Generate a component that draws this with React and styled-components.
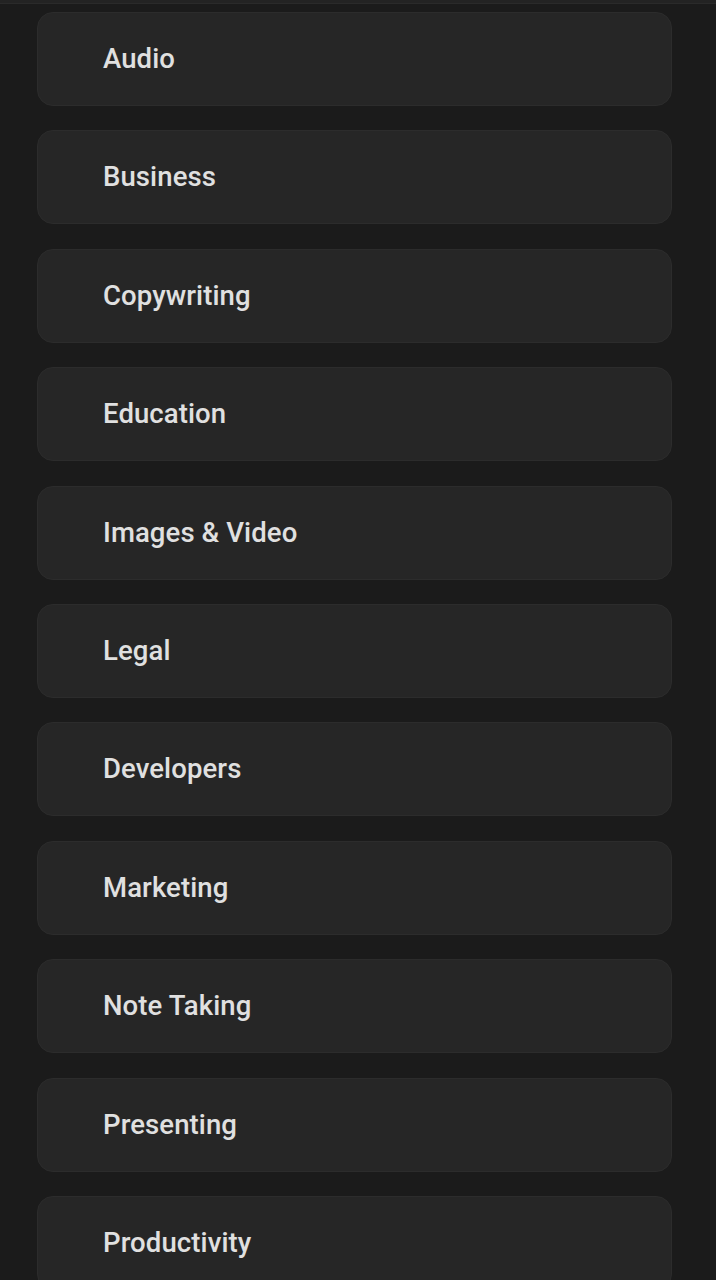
import styled, { createGlobalStyle } from 'styled-components';

const GlobalStyle = createGlobalStyle`
  html, body {
    margin: 0;
    padding: 0;
    background: #1b1b1b;
  }
  body {
    font-family: Roboto, "Liberation Sans", sans-serif;
  }
`;

const Page = styled.div`
  min-height: 1280px;
  background: #1b1b1b;
  border-top: 3px solid #232323;
  box-sizing: border-box;
`;

const TopLine = styled.div`
  height: 1px;
  background: #2a2a2a;
`;

const List = styled.div`
  display: flex;
  flex-direction: column;
  gap: 24.4px;
  padding: 8px 44px 0 37px;
`;

const Card = styled.div`
  height: 94px;
  box-sizing: border-box;
  display: flex;
  align-items: center;
  padding: 0 0 1px 65px;
  background: #262626;
  border: 1px solid #2c2c2c;
  border-radius: 16px;
  cursor: pointer;
`;

const Label = styled.span`
  color: #e0e0e0;
  font-size: 27.5px;
  font-weight: 500;
  letter-spacing: 0.1px;
`;

const categories = [
  'Audio',
  'Business',
  'Copywriting',
  'Education',
  'Images & Video',
  'Legal',
  'Developers',
  'Marketing',
  'Note Taking',
  'Presenting',
  'Productivity',
];

export default function App()
{
  return <Page>
    <GlobalStyle />
    <TopLine />
    <List>
      {categories.map((name) => (
        <Card key={name}>
          <Label>{name}</Label>
        </Card>
      ))}
    </List>
  </Page>;
}
